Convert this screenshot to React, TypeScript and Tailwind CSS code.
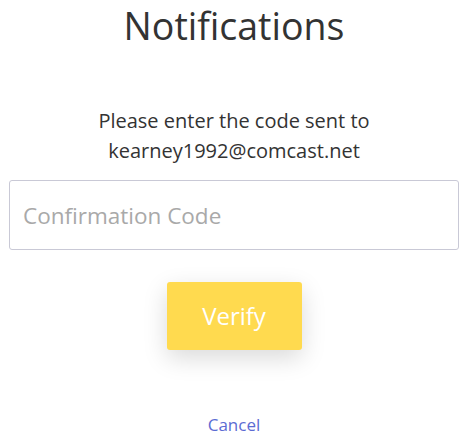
export default function App() {
  return (
    <div className="w-[468px] px-[9px] bg-white min-h-[441px] flex flex-col items-center text-[#333]" style={{ fontFamily: '"Open Sans", sans-serif' }}>
      <h1 className="text-[37.5px] leading-[52px] text-[#333] text-center">Notifications</h1>
      <p className="mt-[54px] text-[20px] leading-[30px] text-center text-[#333]">
        Please enter the code sent to
        <br />
        kearney1992@comcast.net
      </p>
      <input
        className="mt-[14px] w-full h-[70px] border border-[#c9c9d6] rounded-[3px] px-[13px] text-[22.5px] placeholder:text-[#a9a9a9] outline-none"
        placeholder="Confirmation Code"
      />
      <button className="mt-[32px] w-[135px] h-[68px] bg-[#ffda4f] rounded-[3px] text-white text-[24px] shadow-[0_8px_24px_rgba(0,0,0,0.15)]">
        Verify
      </button>
      <a className="mt-[63px] text-[#5c6bd3] text-[17px] leading-[24px]" href="#">Cancel</a>
    </div>
  );
}
